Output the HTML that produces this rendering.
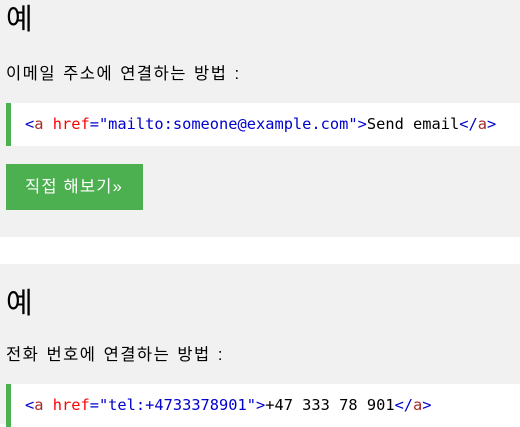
<!DOCTYPE html>
<html><head><meta charset="utf-8"><style>
*{margin:0;padding:0;box-sizing:border-box}
body{width:520px;height:424px;overflow:hidden;background:#fff;font-family:"Liberation Sans","Noto Sans CJK KR",sans-serif;color:#000}
.p{background:#f1f1f1;position:absolute;left:0;width:520px}
h2{position:absolute;left:6px;font-size:29px;font-weight:normal;line-height:32px}
.t{position:absolute;left:6px;font-size:16.5px;line-height:20px;letter-spacing:1.5px;word-spacing:1px}
.c{position:absolute;left:6px;width:514px;height:43px;background:#fff;border-left:5px solid #4CAF50;font-family:"DejaVu Sans Mono",monospace;font-size:15.35px;line-height:43px;padding-left:14px;white-space:nowrap}
.b{color:#0000cd}.n{color:#a52a2a}.r{color:#ff0000}.v{color:#0000cd}
.btn{position:absolute;left:6px;top:164px;width:137px;height:46px;background:#4CAF50;color:#fff;font-size:16.5px;line-height:46px;padding-left:19px;letter-spacing:1.2px}
</style></head><body>
<div class="p" style="top:0;height:237px">
<h2 style="top:4px">예</h2>
<div class="t" style="top:64px">이메일 주소에 연결하는 방법 :</div>
<div class="c" style="top:103px"><span class="b">&lt;</span><span class="n">a</span> <span class="r">href</span><span class="v">="mailto:someone@example.com"</span><span class="b">&gt;</span>Send email<span class="b">&lt;/</span><span class="n">a</span><span class="b">&gt;</span></div>
<div class="btn">직접 해보기»</div>
</div>
<div class="p" style="top:264px;height:160px">
<h2 style="top:24px">예</h2>
<div class="t" style="top:81px">전화 번호에 연결하는 방법 :</div>
<div class="c" style="top:120px"><span class="b">&lt;</span><span class="n">a</span> <span class="r">href</span><span class="v">="tel:+4733378901"</span><span class="b">&gt;</span>+47 333 78 901<span class="b">&lt;/</span><span class="n">a</span><span class="b">&gt;</span></div>
</div>
</body></html>
